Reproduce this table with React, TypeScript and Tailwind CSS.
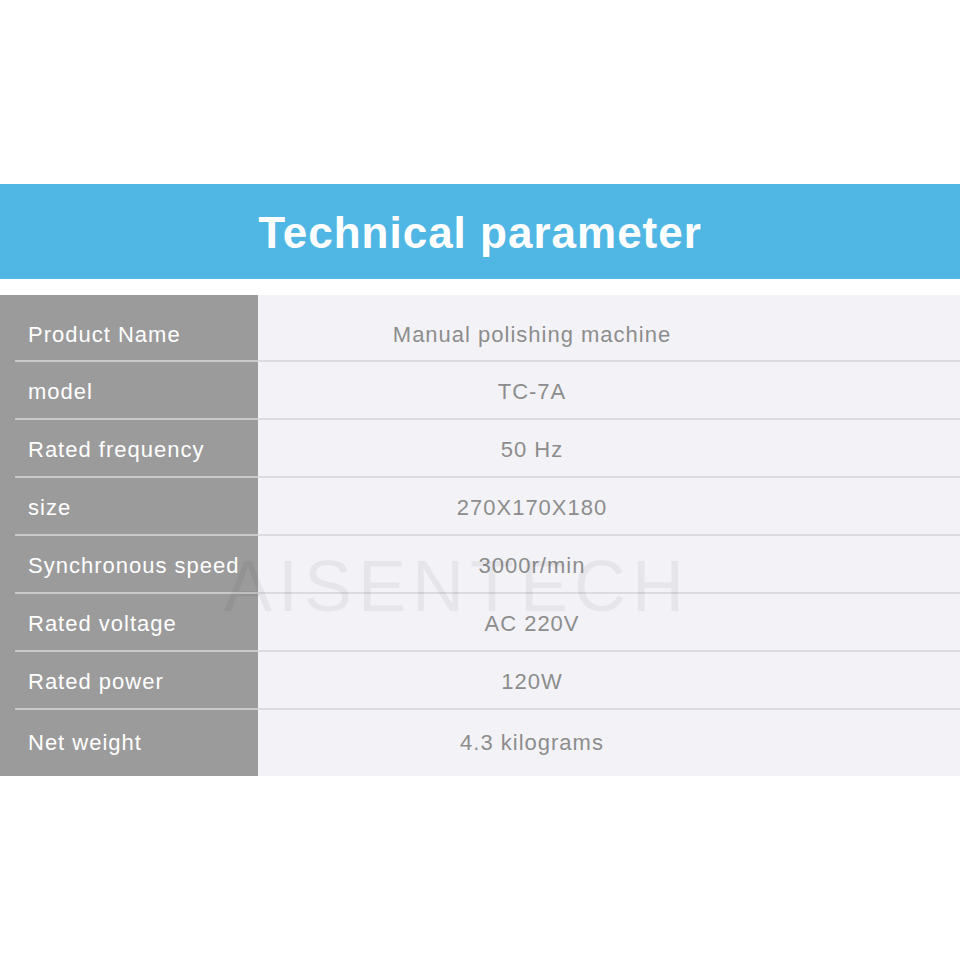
import React from 'react';

const rows: [string, string][] = [
  ['Product Name', 'Manual polishing machine'],
  ['model', 'TC-7A'],
  ['Rated frequency', '50 Hz'],
  ['size', '270X170X180'],
  ['Synchronous speed', '3000r/min'],
  ['Rated voltage', 'AC 220V'],
  ['Rated power', '120W'],
  ['Net weight', '4.3 kilograms'],
];

export default function App() {
  return (
    <div className="w-[960px] h-[960px] bg-white font-['Liberation_Sans','Arial',sans-serif] pt-[184px]">
      {/* title band */}
      <div className="h-[95px] bg-[#50b7e5] flex items-center justify-center">
        <h1 className="text-[44px] font-bold text-white tracking-[1px] leading-none pt-[3px]">Technical parameter</h1>
      </div>

      {/* spec table */}
      <div className="relative mt-[16px] flex flex-col">
        {rows.map(([label, value], i) => {
          const first = i === 0;
          const last = i === rows.length - 1;
          return (
            <div key={label} className="flex">
              <div className={`w-[258px] bg-[#9b9b9b] flex flex-col ${first ? 'h-[67px]' : last ? 'h-[66px]' : 'h-[58px]'}`}>
                <div className={`flex-1 flex items-center pl-[28px] text-[22px] tracking-[1px] text-white whitespace-nowrap ${first ? 'pt-[13px]' : last ? 'pb-[2px]' : 'pt-[3px]'}`}>
                  {label}
                </div>
                {!last && <div className="ml-[15px] h-[2px] bg-[#c9c9c9]" />}
              </div>
              <div className="flex-1 bg-[#f3f3f7] flex flex-col">
                <div className={`flex-1 flex items-center justify-center pr-[154px] text-[22px] tracking-[1px] text-[#8d8d8d] ${first ? 'pt-[13px]' : last ? 'pb-[2px]' : 'pt-[3px]'}`}>
                  {value}
                </div>
                {!last && <div className="h-[2px] bg-[#dcdce0]" />}
              </div>
            </div>
          );
        })}

        {/* watermark */}
        <div className="absolute left-[224px] top-[255px] text-[72px] leading-none tracking-[6px] text-black/[0.05] pointer-events-none">
          AISENTECH
        </div>
      </div>
    </div>
  );
}
